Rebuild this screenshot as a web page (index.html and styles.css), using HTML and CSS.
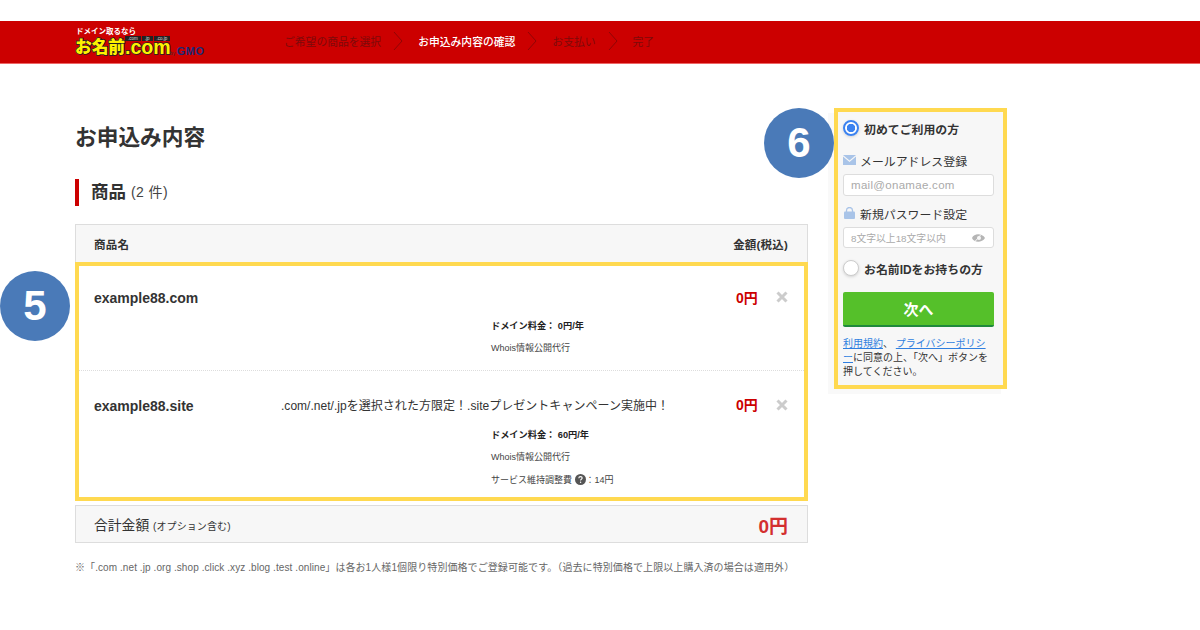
FILE: index.html
```html
<!DOCTYPE html>
<html lang="ja">
<head>
<meta charset="utf-8">
<title>お申込み内容</title>
<link rel="stylesheet" href="styles.css">
</head>
<body>
<header class="topbar">
  <div class="logo">
    <div class="logo-tag">ドメイン取るなら</div>
    <div class="logo-main"><span class="logo-jp">お名前</span><span class="logo-com">.com</span></div>
    <div class="logo-by"><small>by</small>GMO</div>
    <div class="logo-tlds"><span>.com</span><span>.jp</span><span>.co.jp</span></div>
  </div>
  <ol class="steps">
    <li class="step">ご希望の商品を選択</li>
    <li class="chev"><svg width="10" height="20" viewBox="0 0 10 20"><polyline points="1,1 9,10 1,19" fill="none" stroke="#8f0505" stroke-width="1"/></svg></li>
    <li class="step current">お申込み内容の確認</li>
    <li class="chev"><svg width="10" height="20" viewBox="0 0 10 20"><polyline points="1,1 9,10 1,19" fill="none" stroke="#8f0505" stroke-width="1"/></svg></li>
    <li class="step">お支払い</li>
    <li class="chev"><svg width="10" height="20" viewBox="0 0 10 20"><polyline points="1,1 9,10 1,19" fill="none" stroke="#8f0505" stroke-width="1"/></svg></li>
    <li class="step">完了</li>
  </ol>
</header>
<main class="page">
  <section class="content">
    <h1 class="title">お申込み内容</h1>
    <h2 class="section"><b>商品</b> <span>(2 件)</span></h2>
    <div class="thead"><span>商品名</span><span>金額(税込)</span></div>
    <div class="rows">
      <span class="badge badge5">5</span>
      <article class="row r1">
        <div class="row-top">
          <div class="name">example88.com</div>
          <div class="promo"></div>
          <div class="price">0円</div>
          <svg class="close" width="12" height="12" viewBox="0 0 12 12"><path d="M1.5 1.5l9 9M10.5 1.5l-9 9" stroke="#ccc" stroke-width="3"/></svg>
        </div>
        <ul class="details">
          <li class="strong">ドメイン料金： 0円/年</li>
          <li>Whois情報公開代行</li>
        </ul>
      </article>
      <article class="row r2">
        <div class="row-top">
          <div class="name">example88.site</div>
          <div class="promo">.com/.net/.jpを選択された方限定！.siteプレゼントキャンペーン実施中！</div>
          <div class="price">0円</div>
          <svg class="close" width="12" height="12" viewBox="0 0 12 12"><path d="M1.5 1.5l9 9M10.5 1.5l-9 9" stroke="#ccc" stroke-width="3"/></svg>
        </div>
        <ul class="details">
          <li class="strong">ドメイン料金： 60円/年</li>
          <li>Whois情報公開代行</li>
          <li>サービス維持調整費 <svg class="help" width="11" height="11" viewBox="0 0 11 11"><circle cx="5.5" cy="5.5" r="5.5" fill="#555"/><path d="M3.8 4.2c0-1 .8-1.6 1.7-1.6s1.7.6 1.7 1.5c0 1.2-1.6 1.2-1.6 2.3" fill="none" stroke="#fff" stroke-width="1.1"/><circle cx="5.6" cy="8.3" r=".7" fill="#fff"/></svg>：14円</li>
        </ul>
      </article>
    </div>
    <div class="total"><div class="total-label">合計金額 <small>(オプション含む)</small></div><div class="total-price">0円</div></div>
    <p class="note">※「.com .net .jp .org .shop .click .xyz .blog .test .online」は各お1人様1個限り特別価格でご登録可能です。（過去に特別価格で上限以上購入済の場合は適用外）</p>
  </section>
  <aside class="side">
    <span class="badge badge6">6</span>
    <div class="radio-row"><span class="radio on"></span>初めてご利用の方</div>
    <label class="field-label lab-mail">
      <svg width="13" height="10" viewBox="0 0 13 10"><path d="M0 0h13L6.5 5.5z" fill="#a9c4e8"/><path d="M0 1.5v8.500h13V1.5L6.5 7z" fill="#a9c4e8"/></svg>
      メールアドレス登録
    </label>
    <div class="input mailbox">mail@onamae.com</div>
    <label class="field-label lab-pass">
      <svg width="13" height="12" viewBox="0 0 13 12"><path d="M3.5 5V3.5a3 3 0 016 0V5" fill="none" stroke="#a9c4e8" stroke-width="1.3"/><rect x="1" y="4.5" width="11" height="7.5" rx="1" fill="#a9c4e8"/></svg>
      新規パスワード設定
    </label>
    <div class="input passbox"><span>8文字以上18文字以内</span><svg width="13" height="8" viewBox="0 0 13 8"><path d="M0 4c2-5 10-5 13 0-3 5-11 5-13 0z" fill="#b5b5b5"/><circle cx="7" cy="4" r="2" fill="#f7f7f7"/><path d="M3 7.5L9 .5" stroke="#f7f7f7"/></svg></div>
    <div class="radio-row second"><span class="radio"></span>お名前IDをお持ちの方</div>
    <button class="next">次へ</button>
    <p class="terms"><a>利用規約</a>、 <a>プライバシーポリシ<br>ー</a>に同意の上、「次へ」ボタンを<br>押してください。</p>
  </aside>
</main>
</body>
</html>
```

FILE: styles.css
```css
* { box-sizing: border-box; }
html, body { margin: 0; padding: 0; }
body {
  width: 1200px; height: 630px; overflow: hidden; background: #fff; color: #333;
  font-family: "Liberation Sans", "Noto Sans CJK JP", sans-serif;
}
.topbar {
  margin-top: 21px; height: 43px; background: #cc0000; border-bottom: 1px solid #e66;
  display: flex; align-items: center; padding: 0 0 2px 75px;
}
.logo { position: relative; width: 134px; height: 40px; flex: none; }
.logo-tag { position: absolute; left: 1px; top: 6px; font-size: 7.5px; line-height: 9px; font-weight: 700; color: #fff; white-space: nowrap; }
.logo-main { position: absolute; left: 0; top: 19px; height: 15px; display: flex; align-items: center; white-space: nowrap; }
.logo-jp, .logo-com { font-weight: 900; color: #fff200; -webkit-text-stroke: 1.6px #222; paint-order: stroke fill; line-height: 15px; }
.logo-jp { font-size: 16.7px; }
.logo-com { font-size: 19.5px; }
.logo-by { position: absolute; left: 95px; top: 26px; font-size: 11px; line-height: 9px; font-weight: 700; color: #1a2a78; letter-spacing: .5px; white-space: nowrap; }
.logo-by small { font-size: 4.5px; color: #333; font-weight: 400; margin-right: 1px; }
.logo-tlds { position: absolute; left: 50px; top: 15px; display: flex; gap: 1px; }
.logo-tlds span { background: #222; color: #ddd; font-size: 4.5px; line-height: 5px; padding: 0 3px; }
.steps { list-style: none; display: flex; align-items: center; margin: 0; padding: 0 0 0 75px; }
.step { font-size: 10.8px; color: #7d0a0a; white-space: nowrap; }
.step.current { color: #fff; font-weight: 500; }
.chev { display: flex; margin: 0 15px 0 12px; }
.page { display: flex; align-items: flex-start; padding: 44px 0 0 75px; }
.content { width: 733px; flex: none; }
.title { margin: 18px 0 0; font-size: 21.7px; line-height: 24px; font-weight: 700; color: #333; }
.section {
  margin: 29px 0 0; height: 27px; border-left: 4px solid #cc0000; padding-left: 12px;
  display: flex; align-items: center; gap: 5px; font-weight: 400; font-size: 14px; line-height: 24px;
}
.section b { font-size: 17.5px; font-weight: 700; margin-top: -2px; }
.section span { margin-top: -2px; color: #444; letter-spacing: .4px; }
.thead {
  margin-top: 18px; height: 38px; background: #f7f7f7; border: 1px solid #ddd; border-bottom: 0;
  display: flex; align-items: center; justify-content: space-between; padding: 0 19px 0 18px; font-size: 11.5px; font-weight: 700; letter-spacing: .2px;
}
.rows { position: relative; height: 239px; border: 4px solid #ffd950; }
.row { padding: 0 16px 0 15px; }
.r1 { height: 105px; border-bottom: 1px dotted #ddd; padding-top: 22px; }
.r2 { padding-top: 24px; }
.row-top { display: flex; align-items: center; height: 20px; }
.name { width: 187px; font-size: 14px; font-weight: 700; }
.r2 .name { margin-top: 1px; }
.promo { flex: 1; font-size: 12px; white-space: nowrap; margin-top: -2px; letter-spacing: .03px; }
.price { width: 21px; margin-right: 20px; font-size: 14px; font-weight: 700; color: #cc0000; white-space: nowrap; margin-top: -2px; }
.close { flex: none; margin-top: -3px; margin-left: -1px; }
.r2 .close { margin-top: -1px; }
.details { list-style: none; margin: 7px 0 0 397px; padding: 0; font-size: 9px; line-height: 22px; color: #444; }
.strong { font-weight: 700; color: #222; font-size: 9.2px; }
.r2 .details { margin-top: 10px; line-height: 21.5px; }
.r2 .details li:last-child { margin-top: 2px; }
.help { vertical-align: -2px; }
.total {
  margin-top: 4px; height: 38px; background: #f7f7f7; border: 1px solid #ddd;
  display: flex; align-items: center; justify-content: space-between; padding: 0 19px 0 18px;
}
.total-label { font-size: 13.8px; }
.total-label small { font-size: 10px; letter-spacing: .1px; }
.total-price { font-size: 19px; font-weight: 700; color: #d32f2f; }
.note { margin: 18px 0 0; font-size: 10px; line-height: 14px; color: #666; white-space: nowrap; letter-spacing: .08px; }
.side {
  position: relative; flex: none; width: 173px; height: 281px; margin-left: 26px;
  background: #f7f7f7; border: 4px solid #ffd950; padding: 4px 9px 0 5px; font-size: 11.9px;
  box-shadow: -6px 5px 0 #f9f9f9;
}
.badge {
  position: absolute; width: 70px; height: 70px; border-radius: 50%; background: #4a7ab8;
  color: #fff; font-size: 42px; font-weight: 700; display: flex; align-items: center; justify-content: center;
}
.badge5 { left: -79px; top: 5px; }
.badge6 { left: -74px; top: -4px; }
.radio-row { display: flex; align-items: center; gap: 5px; height: 24px; font-weight: 700; font-size: 11.9px; }
.radio-row.second { margin-top: 8px; }
.radio { width: 16px; height: 16px; border-radius: 50%; background: #fff; border: 1px solid #ccc; box-shadow: 0 1px 3px rgba(0,0,0,.15); }
.radio.on { border: 2px solid #3b82f0; background: radial-gradient(circle, #3b82f0 0 4px, #fff 4.5px); }
.field-label { display: flex; align-items: center; gap: 4px; height: 20px; font-size: 11.9px; }
.lab-mail { margin-top: 10px; }
.lab-pass { margin-top: 7px; }
.input {
  height: 22px; margin-top: 4px; background: #fff; border: 1px solid #ddd; border-radius: 3px;
  padding: 0 8px 0 7px; display: flex; align-items: center; justify-content: space-between; color: #aaa; font-size: 11.5px; letter-spacing: .3px;
}
.passbox { font-size: 9.8px; height: 21px; letter-spacing: 0; }
.next {
  display: block; width: 151px; height: 35px; margin-top: 12px; background: #55c02a; border: 0; border-bottom: 2px solid #1f8a3c;
  border-radius: 2px; color: #fff; font: 700 15px "Liberation Sans", "Noto Sans CJK JP", sans-serif;
}
.terms { margin: 10px 0 0; font-size: 10px; line-height: 14px; color: #333; white-space: nowrap; }
.terms a { color: #2f7fe0; text-decoration: underline; }
```
